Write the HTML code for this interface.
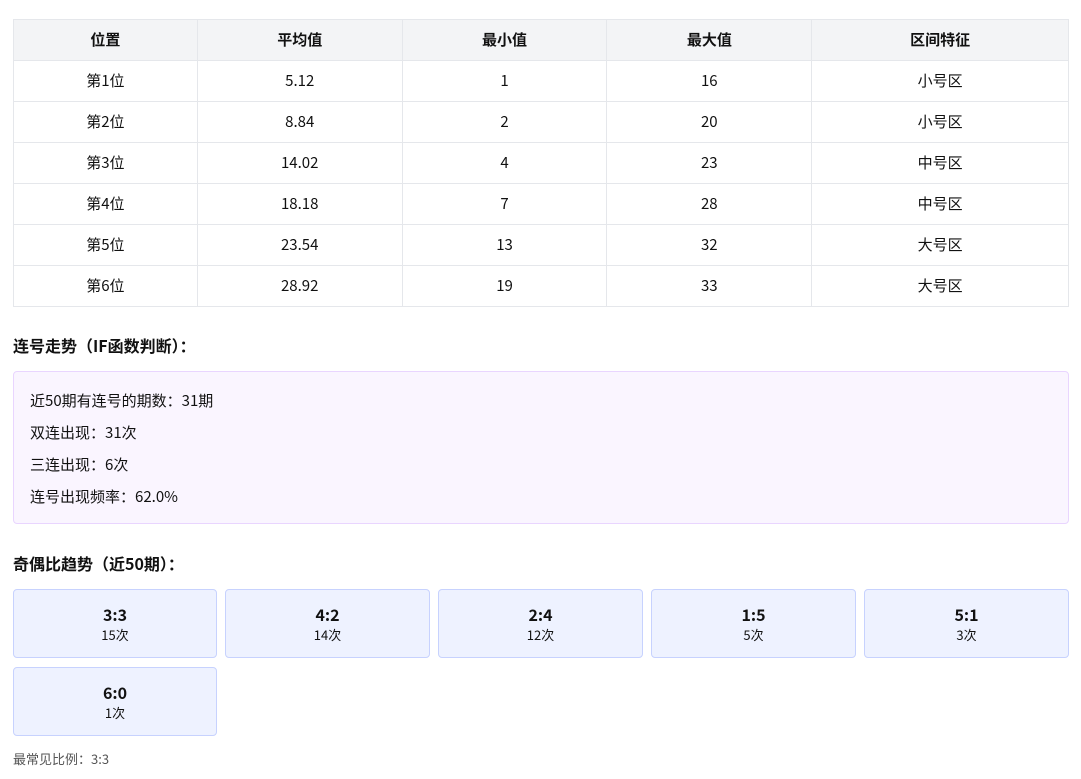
<!DOCTYPE html>
<html><head><meta charset="utf-8"><style>
*{box-sizing:border-box;margin:0;padding:0}
body{width:1081px;height:779px;background:#fff;font-family:"Noto Sans CJK SC","Liberation Sans",sans-serif;color:#111;position:relative;overflow:hidden}
table{position:absolute;left:13px;top:19px;width:1056px;border-collapse:collapse;font-size:15px}
td,th{border:1px solid #e5e7eb;height:41px;line-height:20px;text-align:center;font-weight:normal;padding:0;vertical-align:middle}
th{background:#f3f4f6;font-weight:bold}
h3{position:absolute;left:13px;font-size:16px;font-weight:bold;line-height:22px}
.box{position:absolute;left:13px;top:371px;width:1056px;height:153px;background:#faf5ff;border:1px solid #e9d5ff;border-radius:4px;padding:16px 16px;font-size:15px}
.box div{height:32px;line-height:26px}
.c{position:absolute;width:204px;height:69px;background:#eef2ff;border:1px solid #c7d2fe;border-radius:4px;text-align:center}
.c b{display:block;font-size:16px;margin-top:13px;line-height:22px}
.c span{display:block;font-size:13px;line-height:20px}
.f{position:absolute;left:13px;top:749px;font-size:13px;color:#555;line-height:20px}
</style></head><body>
<table>
<colgroup><col style="width:184px"><col style="width:205px"><col style="width:205px"><col style="width:205px"><col style="width:257px"></colgroup>
<tr><th>位置</th><th>平均值</th><th>最小值</th><th>最大值</th><th>区间特征</th></tr>
<tr><td>第1位</td><td>5.12</td><td>1</td><td>16</td><td>小号区</td></tr>
<tr><td>第2位</td><td>8.84</td><td>2</td><td>20</td><td>小号区</td></tr>
<tr><td>第3位</td><td>14.02</td><td>4</td><td>23</td><td>中号区</td></tr>
<tr><td>第4位</td><td>18.18</td><td>7</td><td>28</td><td>中号区</td></tr>
<tr><td>第5位</td><td>23.54</td><td>13</td><td>32</td><td>大号区</td></tr>
<tr><td>第6位</td><td>28.92</td><td>19</td><td>33</td><td>大号区</td></tr>
</table>
<h3 style="top:334px">连号走势（IF函数判断）：</h3>
<div class="box"><div>近50期有连号的期数：31期</div><div>双连出现：31次</div><div>三连出现：6次</div><div>连号出现频率：62.0%</div></div>
<h3 style="top:552px">奇偶比趋势（近50期）：</h3>
<div class="c" style="left:13px;top:589px"><b>3:3</b><span>15次</span></div>
<div class="c" style="left:225px;top:589px;width:205px"><b>4:2</b><span>14次</span></div>
<div class="c" style="left:438px;top:589px;width:205px"><b>2:4</b><span>12次</span></div>
<div class="c" style="left:651px;top:589px;width:205px"><b>1:5</b><span>5次</span></div>
<div class="c" style="left:864px;top:589px;width:205px"><b>5:1</b><span>3次</span></div>
<div class="c" style="left:13px;top:667px"><b>6:0</b><span>1次</span></div>
<div class="f">最常见比例：3:3</div>
</body></html>
